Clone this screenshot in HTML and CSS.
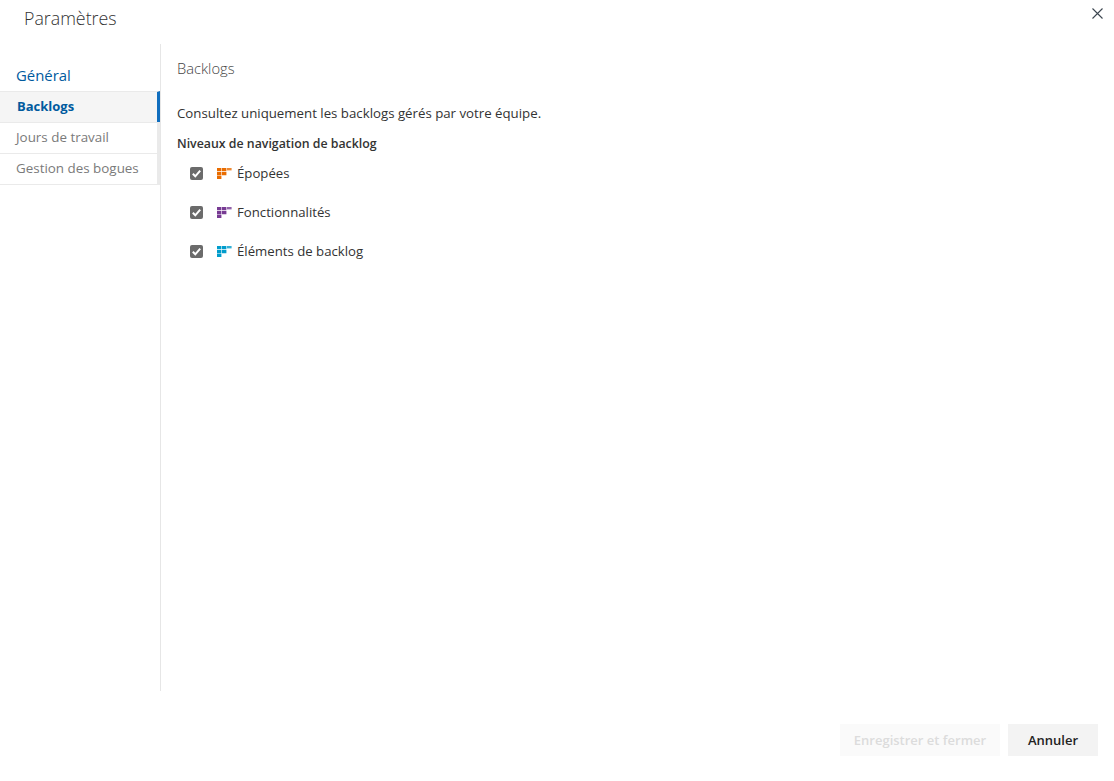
FILE: index.html
```html
<!DOCTYPE html>
<html lang="fr">
<head>
<meta charset="utf-8">
<title>Paramètres</title>
<link rel="stylesheet" href="styles.css">
</head>
<body>
<div class="dialog">
  <header class="header">
    <h1 class="title">Paramètres</h1>
    <button class="close" aria-label="Fermer">
      <svg width="11" height="11" viewBox="0 0 11 11"><path d="M0.5 0.5L10.5 10.5M10.5 0.5L0.5 10.5" stroke="#3c4650" stroke-width="1.1" fill="none"/></svg>
    </button>
  </header>
  <main class="main">
    <nav class="nav">
      <div class="nav-head">Général</div>
      <a class="nav-item active">Backlogs</a>
      <a class="nav-item">Jours de travail</a>
      <a class="nav-item">Gestion des bogues</a>
    </nav>
    <section class="content">
      <h2 class="section-title">Backlogs</h2>
      <p class="intro">Consultez uniquement les backlogs gérés par votre équipe.</p>
      <h3 class="group-label">Niveaux de navigation de backlog</h3>
      <ul class="levels">
        <li class="level">
          <span class="check"><svg width="13" height="13" viewBox="0 0 13 13"><path d="M2.8 6.8L5.3 9.3L10.2 3.6" stroke="#fff" stroke-width="2" fill="none"/></svg></span>
          <svg class="bl-icon epic" width="15" height="11" viewBox="0 0 15 11"><path d="M0 0h4.4v3.3H0zM5 0h4.4v3.3H5zM0 3.9h4.4v3.3H0zM5 3.9h4.4v3.3H5zM0 7.8h4.4V11H0z" fill="currentColor"/><path d="M10 0h4.6v2.4H10z" fill="currentColor" fill-opacity=".8"/></svg>
          <span class="level-name">Épopées</span>
        </li>
        <li class="level">
          <span class="check"><svg width="13" height="13" viewBox="0 0 13 13"><path d="M2.8 6.8L5.3 9.3L10.2 3.6" stroke="#fff" stroke-width="2" fill="none"/></svg></span>
          <svg class="bl-icon feature" width="15" height="11" viewBox="0 0 15 11"><path d="M0 0h4.4v3.3H0zM5 0h4.4v3.3H5zM0 3.9h4.4v3.3H0zM5 3.9h4.4v3.3H5zM0 7.8h4.4V11H0z" fill="currentColor"/><path d="M10 0h4.6v2.4H10z" fill="currentColor" fill-opacity=".8"/></svg>
          <span class="level-name">Fonctionnalités</span>
        </li>
        <li class="level">
          <span class="check"><svg width="13" height="13" viewBox="0 0 13 13"><path d="M2.8 6.8L5.3 9.3L10.2 3.6" stroke="#fff" stroke-width="2" fill="none"/></svg></span>
          <svg class="bl-icon item" width="15" height="11" viewBox="0 0 15 11"><path d="M0 0h4.4v3.3H0zM5 0h4.4v3.3H5zM0 3.9h4.4v3.3H0zM5 3.9h4.4v3.3H5zM0 7.8h4.4V11H0z" fill="currentColor"/><path d="M10 0h4.6v2.4H10z" fill="currentColor" fill-opacity=".8"/></svg>
          <span class="level-name">Éléments de backlog</span>
        </li>
      </ul>
    </section>
  </main>
  <footer class="footer">
    <button class="btn btn-save" disabled>Enregistrer et fermer</button>
    <button class="btn btn-cancel">Annuler</button>
  </footer>
</div>
</body>
</html>
```
FILE: styles.css
```css
* { box-sizing: border-box; }
html, body { margin: 0; padding: 0; background: #fff; }
body { font-family: "Open Sans", "Liberation Sans", sans-serif; color: #333; font-size: 13px; }
.dialog { width: 1114px; height: 781px; display: flex; flex-direction: column; overflow: hidden; }
.header { height: 44px; flex: none; display: flex; justify-content: space-between; align-items: flex-start; padding: 0 11px 0 24px; }
.title { margin: 5px 0 0; font-size: 17.8px; line-height: 27px; font-weight: 300; color: #333; }
.close { margin-top: 8px; padding: 0; width: 11px; height: 11px; border: 0; background: none; display: block; line-height: 0; }
.main { flex: none; height: 647px; display: flex; }
.nav { width: 161px; flex: none; border-right: 1px solid #e6e6e6; padding-top: 20px; display: flex; flex-direction: column; }
.nav-head { height: 27px; padding-left: 16px; font-size: 14.9px; line-height: 23px; color: #005a9e; }
.nav-item { display: block; height: 31px; padding-left: 16px; font-size: 13.4px; line-height: 28px; color: #7a7a7a; border-top: 1px solid #eaeaea; border-right: 3px solid #eaeaea; background: #fff; }
.nav-item:last-child { height: 32px; border-bottom: 1px solid #eaeaea; }
.nav-item.active { background: #f5f5f5; color: #005a9e; font-size: 13px; font-weight: 700; padding-left: 17px; border-right-color: #106ebe; }
.content { flex: 1; padding: 13px 0 0 16px; }
.section-title { margin: 0; font-size: 14.7px; line-height: 22px; font-weight: 300; color: #444; }
.intro { margin: 24px 0 0; font-size: 13.25px; line-height: 20px; color: #333; }
.group-label { margin: 11px 0 0; font-size: 12.35px; line-height: 20px; font-weight: 600; color: #333; }
.levels { list-style: none; margin: 9px 0 0; padding: 0 0 0 13px; }
.level { height: 39px; display: flex; align-items: flex-start; }
.check { width: 13px; height: 13px; margin-top: 4px; background: #6b6b6b; border-radius: 2px; display: block; line-height: 0; }
.bl-icon { margin: 5px 0 0 14px; }
.epic { color: #e96c00; }
.feature { color: #773b93; }
.item { color: #009ccc; }
.level-name { margin-left: 5px; font-size: 13.2px; line-height: 20px; color: #333; }
.footer { flex: none; display: flex; justify-content: flex-end; gap: 8px; padding: 33px 16px 0 0; }
.btn { height: 32px; border: 0; font-family: inherit; font-size: 13px; font-weight: 600; padding: 0; }
.btn-save { width: 160px; background: #fafafa; color: #dcdcdc; }
.btn-cancel { width: 90px; background: #f3f3f3; color: #222; }
```
